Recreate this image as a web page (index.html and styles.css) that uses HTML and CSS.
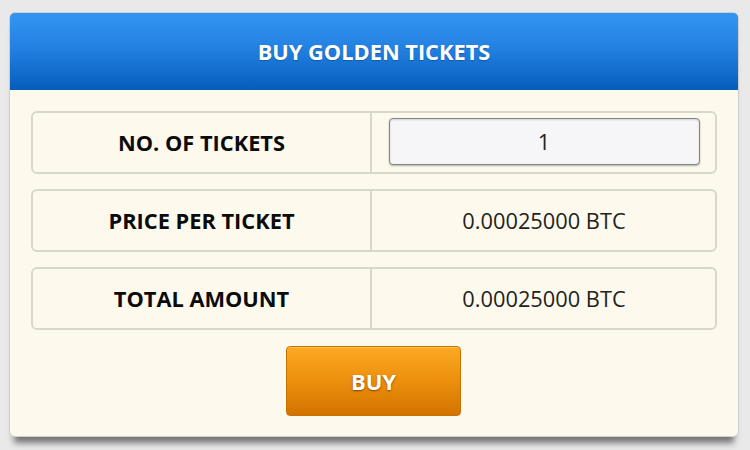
FILE: index.html
```html
<!DOCTYPE html>
<html>
<head>
<meta charset="utf-8">
<link rel="stylesheet" href="styles.css">
</head>
<body>
<div class="card">
  <div class="card-header">BUY GOLDEN TICKETS</div>
  <div class="card-body">
    <div class="row">
      <div class="cell label">NO. OF TICKETS</div>
      <div class="cell value"><input class="qty" type="text" value="1"></div>
    </div>
    <div class="row">
      <div class="cell label">PRICE PER TICKET</div>
      <div class="cell value">0.00025000 BTC</div>
    </div>
    <div class="row">
      <div class="cell label">TOTAL AMOUNT</div>
      <div class="cell value">0.00025000 BTC</div>
    </div>
    <div class="actions">
      <button class="buy">BUY</button>
    </div>
  </div>
</div>
</body>
</html>
```

FILE: styles.css
```css
html, body {
  margin: 0;
  padding: 0;
}
body {
  background: #e9e9e9;
  width: 750px;
  height: 450px;
  overflow: hidden;
  font-family: "Open Sans", "Noto Sans", sans-serif;
}
.card {
  width: 730px;
  margin: 12px 0 0 9px;
  box-sizing: border-box;
  border: 1px solid #cfcfcf;
  border-radius: 6px;
  background: #fdfaed;
  box-shadow: 0 11px 6px -5px rgba(0, 0, 0, 0.5);
  overflow: hidden;
}
.card-header {
  height: 78px;
  margin: -1px -1px 0 -1px;
  border: 1px solid #1b64b4;
  border-bottom: none;
  border-radius: 6px 6px 0 0;
  background: linear-gradient(to bottom, #3395f2 0%, #2381e2 45%, #055dbb 100%);
  color: #fff;
  font-weight: 700;
  font-size: 21.8px;
  display: flex;
  align-items: center;
  justify-content: center;
  text-shadow: 0 1px 1px rgba(0, 0, 0, 0.25);
  box-sizing: border-box;
  padding-bottom: 1px;
}
.card-body {
  padding: 21px 21px 20px 21px;
  display: flex;
  flex-direction: column;
  gap: 15px;
}
.row {
  height: 63px;
  box-sizing: border-box;
  border: 2px solid #d9d6cc;
  border-radius: 6px;
  display: grid;
  grid-template-columns: 339px 1fr;
}
.cell {
  display: flex;
  align-items: center;
  justify-content: center;
  font-size: 21.8px;
  color: #111;
}
.label {
  font-weight: 700;
  color: #0b0b0b;
  border-right: 2px solid #d9d6cc;
}
.value {
  color: #222;
  padding-left: 1px;
}
.qty {
  width: 311px;
  height: 47px;
  box-sizing: border-box;
  margin: -3px 0 0 0;
  border: 1px solid #858585;
  border-radius: 4px;
  background: #f6f6f8;
  box-shadow: inset 0 1px 2px rgba(0, 0, 0, 0.15), 0 1px 2px rgba(0, 0, 0, 0.3);
  text-align: center;
  font-family: "Open Sans", "Noto Sans", sans-serif;
  font-size: 21.8px;
  color: #222;
  outline: none;
}
.actions {
  display: flex;
  justify-content: center;
  margin-top: 1px;
}
.buy {
  width: 175px;
  height: 70px;
  margin-left: -1px;
  border: 1px solid #c77200;
  border-radius: 4px;
  background: linear-gradient(to bottom, #fca923 0%, #ec8f0d 50%, #d27300 100%);
  color: #fff;
  font-family: "Open Sans", "Noto Sans", sans-serif;
  font-weight: 700;
  font-size: 22px;
  text-shadow: 0 1px 2px rgba(90, 40, 0, 0.7);
  box-shadow: inset 0 1px 0 rgba(255, 220, 140, 0.5);
  cursor: pointer;
}
```
